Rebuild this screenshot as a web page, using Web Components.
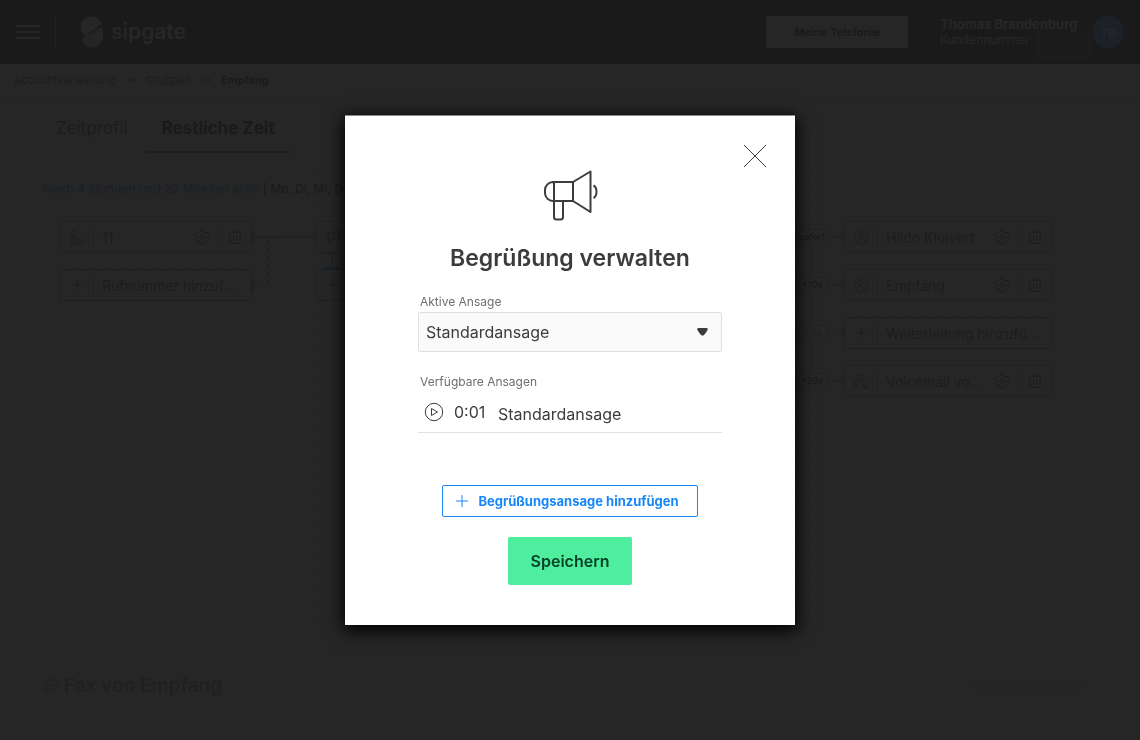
<!DOCTYPE html>
<html lang="de">
<head>
<meta charset="utf-8">
<meta name="viewport" content="width=device-width, initial-scale=1">
<title>Begrüßung verwalten</title>
<style>
  body {
    margin: 0;
    min-height: 100vh;
    background: #fff;
    color: #3c3c3c;
    font-family: Inter, "Liberation Sans", sans-serif;
    font-size: 16px;
    overflow: hidden;
  }
</style>
</head>
<body>
<account-page></account-page>
<modal-dialog heading="Begrüßung verwalten" icon="megaphone">
  <ansage-form></ansage-form>
</modal-dialog>

<script>
const icons = {
  megaphone: ['0 0 56 52', '<path d="M31 12H11a8 8 0 0 0-8 8v3a8 8 0 0 0 8 8h20M12 12v35q0 2.500 2.500 2.500h4q2.500 0 2.500-2.500V31M31 12v19L48.500 42V1.500zM51.500 15.500c4 2 4 10.500 0 12.500"/>'],
  close: ['0 0 24 24', '<path d="M1 1l22 22M23 1L1 23"/>'],
  plus: ['0 0 14 14', '<path d="M7 1v12M1 7h12"/>'],
  play: ['0 0 20 20', '<circle cx="10" cy="10" r="8.700"/><path d="M7.500 6.500v7l6-3.500z"/>'],
  gear: ['0 0 16 16', '<path d="M6.200 1h3.600v2l1.500.9 1.900-1 1.800 3.100-1.700 1.100v1.800l1.700 1.100-1.800 3.100-1.900-1-1.500.9v2H6.200v-2l-1.500-.9-1.900 1L1 10l1.700-1.100V7.100L1 6l1.800-3.100 1.900 1L6.200 3z"/><circle cx="8" cy="8" r="2"/>'],
  trash: ['0 0 16 16', '<path d="M1.500 3.500h13M3 3.500V14.500h10V3.500M5.500 3.500v-2h5v2M6.500 6.500v5M9.500 6.500v5"/>'],
  phone: ['0 0 16 16', '<path d="M3 1.500h2l1.500 3L5 6.500c1 2.500 2.500 3.500 4.500 4.500l2-1 3 1.500v2c-1 1.500-3 1-4.500.5C6 12.500 2 7.500 2 3.500zM1 10h3M1 12.500h5M1 15h7"/>'],
  person: ['0 0 16 16', '<circle cx="8" cy="8" r="7"/><circle cx="8" cy="5.500" r="2.200"/><path d="M4 13.500v-2q0-2 2-2h4q2 0 2 2v2"/>'],
  group: ['0 0 16 16', '<circle cx="8" cy="8" r="7"/><circle cx="6.500" cy="5.500" r="2"/><path d="M9.500 3.500q2.500.5 1.500 3.500M3.500 12v-1q0-2 2-2h2q2 0 2 2v3M11 8.500q2 .5 2 3"/>'],
  voicemail: ['0 0 16 16', '<circle cx="6" cy="3.500" r="2.500"/><path d="M1.500 15V10q0-2 2-2h5q1.500 0 2 2M4 15v-4M10 1q3 1 1.500 4.500"/><circle cx="9.500" cy="13.500" r="1.500"/><circle cx="13.500" cy="13.500" r="1.500"/><path d="M9.500 15h4"/>'],
  printer: ['0 0 16 16', '<path d="M3 7V3h6l2 2v2M3 13H1V9q0-2 2-2h6q2 0 2 2v4H9M3 11h6v4H3zM6 1h6l2 2v3q1 0 1 2v4"/>'],
  arrow: ['0 0 10 8', '<path d="M0 4h9M6 1l3 3-3 3"/>'],
  menu: ['0 0 24 14', '<path d="M0 1h24M0 7h24M0 13h24"/>'],
};

class AppIcon extends HTMLElement {
  connectedCallback() {
    const [viewBox, body] = icons[this.getAttribute('name')];
    const [, , w, h] = viewBox.split(' ');
    const stroke = this.getAttribute('stroke') || 1;
    this.attachShadow({ mode: 'open' }).innerHTML = `
      <style>
        :host { display: inline-flex; flex: none; }
      </style>
      <svg width="${ w }" height="${ h }" viewBox="${ viewBox }" fill="none" stroke="currentColor"
        stroke-width="${ stroke }" stroke-linejoin="round" aria-hidden="true">${ body }</svg>`;
  }
}

class AppHeader extends HTMLElement {
  connectedCallback() {
    this.attachShadow({ mode: 'open' }).innerHTML = `
      <style>
        :host { display: block; background: #000; color: #fff; }
        header { display: flex; align-items: center; height: 64px; padding: 0 16px; }
        button { font: inherit; color: inherit; background: none; border: 0; padding: 0; display: flex; }
        .menu { padding-right: 15px; border-right: 1px solid #777; height: 32px; align-items: center; }
        .logo { display: flex; align-items: center; gap: 7px; margin-left: 24px; color: inherit; text-decoration: none; font-size: 21px; font-weight: 600; line-height: 32px; }
        .phone { margin-left: auto; padding: 0 28px; height: 32px; align-items: center; background: #fff; color: #000; border-radius: 2px; font-size: 11px; font-weight: 700; }
        .user { margin-left: 32px; width: 152px; font-size: 12px; line-height: 16px; }
        .user strong { display: block; font-size: 13px; font-weight: 700; white-space: nowrap; }
        .user div { display: flex; gap: 2px; }
        .number { flex: 1; height: 27px; margin-bottom: -11px; background: #333; }
        .avatar { width: 32px; height: 32px; border-radius: 50%; background: #2090f0; color: #fff; display: grid; place-items: center; font-size: 12px; font-weight: 600; }
      </style>
      <header>
        <button class="menu" aria-label="Menü"><app-icon name="menu" stroke="2"></app-icon></button>
        <a class="logo" href="#">
          <svg width="24" height="32" viewBox="0 0 24 32" aria-hidden="true">
            <defs><linearGradient id="fade"><stop offset="0" stop-color="#333"/><stop offset="1" stop-color="#fff"/></linearGradient></defs>
            <path fill="#fff" d="M22 8A11 10.500 0 1 0 5 19.500z"/>
            <path fill="url(#fade)" d="M5 19.500L22 11q2 5 0 13.500H1.500z"/>
            <path fill="#fff" fill-opacity=".8" d="M5 19.500L1.500 24A11 10.500 0 0 0 23 21q0-6-1-10l-9 8z"/>
          </svg>
          <span>sipgate</span>
        </a>
        <button class="phone">Meine Telefonie</button>
        <div class="user"><strong>Thomas Brandenburg</strong><div>Kundennummer: <span class="number"></span></div></div>
        <div class="avatar">TB</div>
      </header>`;
  }
}

class CrumbBar extends HTMLElement {
  connectedCallback() {
    this.attachShadow({ mode: 'open' }).innerHTML = `
      <style>
        :host { display: block; background: #f5f5f5; border-bottom: 1px solid #ccc; font-size: 11px; color: #333; }
        nav { display: flex; align-items: center; gap: 10px; height: 32px; padding: 0 14px; }
        a { color: inherit; text-decoration: none; }
        a[aria-current] { color: #000; font-weight: 700; }
      </style>
      <nav aria-label="Pfad">
        <a href="#">Accountverwaltung</a><app-icon name="arrow"></app-icon>
        <a href="#">Gruppen</a><app-icon name="arrow"></app-icon>
        <a href="#" aria-current="page">Empfang</a>
      </nav>`;
  }
}

class TabBar extends HTMLElement {
  connectedCallback() {
    this.attachShadow({ mode: 'open' }).innerHTML = `
      <style>
        :host { display: flex; gap: 2px; background: #f0f0f0; }
        button { font: inherit; font-size: 17px; color: #333; background: none; border: 0; border-bottom: 2px solid transparent; height: 48px; padding: 0 16px; }
        button[aria-selected=true] { background: #eef0f8; color: #000; font-weight: 700; border-color: #0a80f0; }
      </style>
      <button role="tab" aria-selected="false">Zeitprofil</button>
      <button role="tab" aria-selected="true">Restliche Zeit</button>`;
  }
}

class FlowNode extends HTMLElement {
  connectedCallback() {
    const add = this.hasAttribute('add');
    this.style.left = this.getAttribute('x') + 'px';
    this.style.top = this.getAttribute('y') + 'px';
    this.attachShadow({ mode: 'open' }).innerHTML = `
      <style>
        /* place on the canvas comes from the x and y attributes */
        :host { position: absolute; display: flex; align-items: center; box-sizing: border-box; height: 32px; background: #fff; border: 1px solid ${ add ? '#1787f7' : '#999' }; border-radius: 3px; color: #333; font-size: 14px; }
        :host([wide]) { width: 208px; }
        :host([narrow]) { width: 192px; }
        .icon { width: 32px; display: grid; place-items: center; border-right: 1px solid #999; height: 24px; }
        .name { flex: 1; min-width: 0; padding-left: 8px; overflow: hidden; text-overflow: ellipsis; white-space: nowrap; }
        button { display: grid; place-items: center; width: 33px; height: 24px; padding: 0; border: 0; background: none; color: inherit; }
        button + button { border-left: 1px solid #bbb; }
        ${ add ? '.name { padding-right: 12px; }' : '' }
      </style>
      <span class="icon"><slot name="icon"></slot></span>
      <span class="name"><slot></slot></span>
      ${ add ? '' : `
        <button aria-label="Einstellungen"><app-icon name="gear"></app-icon></button>
        <button aria-label="Löschen"><app-icon name="trash"></app-icon></button>` }`;
  }
}

class FlowBadge extends HTMLElement {
  connectedCallback() {
    this.style.left = this.getAttribute('x') + 'px';
    this.style.top = this.getAttribute('y') + 'px';
    this.attachShadow({ mode: 'open' }).innerHTML = `
      <style>
        :host { position: absolute; box-sizing: border-box; width: 34px; border: 1px solid #7cb5a5; border-radius: 4px; background: #fff; font-size: 9px; font-weight: 600; line-height: 14px; text-align: center; color: #000; }
        :host([faint]) { color: #999; }
      </style>
      <slot></slot>`;
  }
}

class FlowCanvas extends HTMLElement {
  connectedCallback() {
    this.attachShadow({ mode: 'open' }).innerHTML = `
      <style>
        :host { display: block; position: relative; height: 512px; background: radial-gradient(circle at 3px 3px, #bbb 1px, transparent 1px) 0 9px / 16px 16px; }
        p { margin: 0; padding: 21px 3px 0; font-size: 12px; line-height: 16px; font-weight: 500; color: #222; }
        b { font-weight: 500; color: #1787f7; }
        .lines { position: absolute; left: 0; top: 0; }
      </style>
      <p><b>Noch 4 Stunden und 20 Minuten aktiv</b> | Mo, Di, Mi, Do,</p>
      <svg class="lines" width="1060" height="300" fill="none" aria-hidden="true">
        <defs><linearGradient id="line"><stop offset="0" stop-color="#88f"/><stop offset="1" stop-color="#f8b"/></linearGradient></defs>
        <path fill="url(#line)" d="M213 76h63v2h-63z"/>
        <path stroke="#88f" stroke-width="3" d="M213 71v12M213 119v12"/>
        <path stroke="#f8b" stroke-width="3" d="M275 71v12"/>
        <path stroke="#88f" stroke-width="2" stroke-dasharray="3 5" d="M228 80v45h-14"/>
        <path stroke="#f8b" stroke-width="2" d="M286 94h12"/>
        <path stroke="#1787f7" stroke-width="2" d="M286 108h12M292 98v8"/>
        <path stroke="#7cb5a5" stroke-width="2" d="M772 77v144M780 77h22M780 125h22M780 221h22"/>
        <path stroke="#7cb5a5" stroke-width="2" stroke-dasharray="3 4" d="M789 173h13"/>
        <path stroke="#7cb5a5" stroke-width="3" d="M803 71v12M803 119v12M803 167v12M803 215v12"/>
      </svg>
      <flow-node narrow x="20" y="61"><app-icon slot="icon" name="phone"></app-icon>11</flow-node>
      <flow-node narrow add x="20" y="109"><app-icon slot="icon" name="plus"></app-icon>Rufnummer hinzufügen</flow-node>
      <flow-node narrow x="276" y="61"><svg slot="icon" width="16" height="16" viewBox="0 0 56 52" fill="none" stroke="currentColor" stroke-width="3.500" aria-hidden="true">${ icons.megaphone[1] }</svg></flow-node>
      <flow-node narrow add x="276" y="109"><app-icon slot="icon" name="plus"></app-icon></flow-node>
      <flow-badge x="755" y="69">sofort</flow-badge>
      <flow-badge x="755" y="117">+10s</flow-badge>
      <flow-badge x="755" y="165" faint>+10s</flow-badge>
      <flow-badge x="755" y="213">+20s</flow-badge>
      <flow-node wide x="804" y="61"><app-icon slot="icon" name="person"></app-icon>Hildo Klujvert</flow-node>
      <flow-node wide x="804" y="109"><app-icon slot="icon" name="group"></app-icon>Empfang</flow-node>
      <flow-node wide add x="804" y="157"><app-icon slot="icon" name="plus"></app-icon>Weiterleitung hinzufügen</flow-node>
      <flow-node wide x="804" y="205"><app-icon slot="icon" name="voicemail"></app-icon>Voicemail von Empfang</flow-node>`;
  }
}

class FaxSection extends HTMLElement {
  connectedCallback() {
    this.attachShadow({ mode: 'open' }).innerHTML = `
      <style>
        :host { display: flex; align-items: center; gap: 4px; padding: 0 16px 0 4px; height: 28px; color: #777; }
        h2 { margin: 0; font-size: 19px; font-weight: 600; line-height: 28px; }
        a { margin-left: auto; font-size: 12px; font-weight: 600; color: #d0d0d0; text-decoration: none; }
      </style>
      <app-icon name="printer"></app-icon>
      <h2>Fax von Empfang</h2>
      <a href="#">Routing bearbeiten</a>`;
  }
}

class AccountPage extends HTMLElement {
  connectedCallback() {
    this.attachShadow({ mode: 'open' }).innerHTML = `
      <style>
        :host { display: block; }
        main { padding: 8px 40px 0; }
        flow-canvas { margin-top: 7px; }
      </style>
      <app-header></app-header>
      <crumb-bar></crumb-bar>
      <main>
        <tab-bar role="tablist"></tab-bar>
        <flow-canvas></flow-canvas>
        <fax-section></fax-section>
      </main>`;
  }
}

class ModalDialog extends HTMLElement {
  connectedCallback() {
    this.attachShadow({ mode: 'open' }).innerHTML = `
      <style>
        :host { position: fixed; inset: 0; display: grid; place-items: center; background: rgba(27, 27, 27, .953); }
        section { position: relative; box-sizing: border-box; width: 450px; max-width: 100%; padding: 54px 73px 40px; border-top: 1px solid #8a8a8a; background: #fff; box-shadow: 0 4px 16px 2px #000; display: flex; flex-direction: column; gap: 20px; }
        .close { position: absolute; top: 28px; right: 28px; padding: 0; border: 0; background: none; color: #3c3c3c; display: flex; }
        .icon { align-self: center; }
        h1 { margin: 0; font-size: 23px; font-weight: 600; line-height: 32px; text-align: center; }
      </style>
      <section role="dialog" aria-modal="true" aria-labelledby="title">
        <button class="close" aria-label="Schließen"><app-icon name="close"></app-icon></button>
        <app-icon class="icon" name="${ this.getAttribute('icon') }" stroke="2"></app-icon>
        <h1 id="title">${ this.getAttribute('heading') }</h1>
        <slot></slot>
      </section>`;
  }
}

class AnsageForm extends HTMLElement {
  connectedCallback() {
    this.attachShadow({ mode: 'open' }).innerHTML = `
      <style>
        :host { display: block; }
        form { display: flex; flex-direction: column; }
        label, h2 { margin: 0; padding-left: 2px; font-size: 12px; font-weight: 400; line-height: 16px; color: #6e6e6e; }
        .select { display: grid; align-items: center; margin: 2px 0 22px; }
        .select > * { grid-area: 1 / 1; }
        .select svg { justify-self: end; margin-right: 14px; pointer-events: none; }
        select { appearance: none; width: 100%; height: 40px; padding: 0 7px; border: 1px solid #e0e0e0; border-radius: 2px; background: #fafafa; color: #3c3c3c; font: inherit; }
        ul { margin: 2px 0 52px; padding: 0; list-style: none; }
        button { font: inherit; }
        .add { align-self: center; display: flex; align-items: center; gap: 9px; height: 32px; padding: 0 18px 0 12px; border: 1px solid #1787f7; border-radius: 2px; background: #fff; color: #1787f7; font-size: 13px; font-weight: 700; white-space: nowrap; }
        .save { align-self: center; height: 48px; margin-top: 20px; padding: 0 23px; border: 0; border-radius: 2px; background: #4eee9e; color: #053f25; font-weight: 600; }
      </style>
      <form>
        <label for="active">Aktive Ansage</label>
        <div class="select">
          <select id="active"><option>Standardansage</option></select>
          <svg width="11" height="8" viewBox="0 0 11 8" fill="#3c3c3c" aria-hidden="true"><path d="M1.500 0h8q1.500 0 1.200 1.500Q9.500 4.500 7 7q-1.500 1.200-3 0Q1.500 4.500.3 1.500 0 0 1.500 0z"/></svg>
        </div>
        <h2>Verfügbare Ansagen</h2>
        <ul>
          <ansage-row time="0:01">Standardansage</ansage-row>
        </ul>
        <button class="add" type="button"><app-icon name="plus"></app-icon>Begrüßungsansage hinzufügen</button>
        <button class="save" type="button">Speichern</button>
      </form>`;
  }
}

class AnsageRow extends HTMLElement {
  connectedCallback() {
    this.setAttribute('role', 'listitem');
    this.attachShadow({ mode: 'open' }).innerHTML = `
      <style>
        :host { display: flex; align-items: center; height: 40px; padding-left: 6px; border-bottom: 1px solid #e0e0e0; }
        button { display: flex; padding: 0; border: 0; background: none; color: #3c3c3c; }
        time { width: 44px; margin-left: 10px; }
        .name { padding-top: 4px; }
      </style>
      <button aria-label="Abspielen" type="button"><app-icon name="play"></app-icon></button>
      <time>${ this.getAttribute('time') }</time>
      <span class="name"><slot></slot></span>`;
  }
}

customElements.define('app-icon', AppIcon);
customElements.define('app-header', AppHeader);
customElements.define('crumb-bar', CrumbBar);
customElements.define('tab-bar', TabBar);
customElements.define('flow-node', FlowNode);
customElements.define('flow-badge', FlowBadge);
customElements.define('flow-canvas', FlowCanvas);
customElements.define('fax-section', FaxSection);
customElements.define('account-page', AccountPage);
customElements.define('modal-dialog', ModalDialog);
customElements.define('ansage-form', AnsageForm);
customElements.define('ansage-row', AnsageRow);
</script>
</body>
</html>
